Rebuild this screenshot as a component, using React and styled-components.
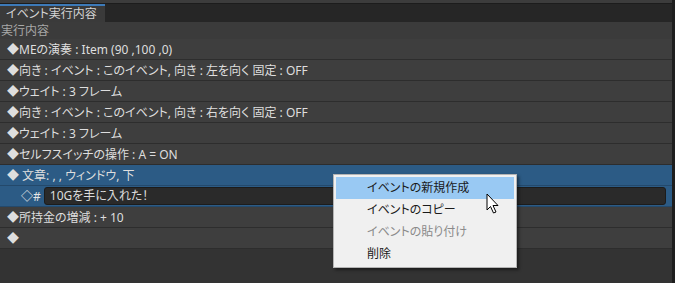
import React from "react";
import styled, { createGlobalStyle } from "styled-components";

const GlobalStyle = createGlobalStyle`
  html, body {
    margin: 0;
    padding: 0;
    background: #333333;
  }
  body {
    font-family: "Noto Sans", "Noto Sans CJK JP", sans-serif;
    font-feature-settings: "palt";
  }
`;

const rows = [
  "◆MEの演奏 : Item (90 ,100 ,0)",
  "◆向き : イベント : このイベント, 向き : 左を向く 固定 : OFF",
  "◆ウェイト : 3 フレーム",
  "◆向き : イベント : このイベント, 向き : 右を向く 固定 : OFF",
  "◆ウェイト : 3 フレーム",
  "◆セルフスイッチの操作 : A = ON",
];

const menuItems = [
  { label: "イベントの新規作成", active: true },
  { label: "イベントのコピー" },
  { label: "イベントの貼り付け", disabled: true },
  { label: "削除" },
];

const App = () => {
  return (
    <>
      <GlobalStyle />
      <Screen>
        <TopStrip />
        <TabBar>
          <Tab>イベント実行内容</Tab>
        </TabBar>
        <Panel>
          <Header>実行内容</Header>
          {rows.map((r, i) => (
            <Row key={i}>{r}</Row>
          ))}
          <Row selected>◆ 文章: , , ウィンドウ, 下</Row>
          <Row selected indent>
            <Mark>◇#</Mark>
            <TextInput>10Gを手に入れた！</TextInput>
          </Row>
          <Row>◆所持金の増減 : + 10</Row>
          <Row>◆</Row>
          <Filler />
        </Panel>

        <Menu>
          {menuItems.map((m) => (
            <MenuItem key={m.label} active={m.active} disabled={m.disabled}>
              {m.label}
            </MenuItem>
          ))}
        </Menu>

        <Cursor width="14" height="22" viewBox="0 0 14 22">
          <path
            d="M1 1 L1 17 L4.5 13.5 L7.5 20 L10 19 L7 12.5 L12 12.5 Z"
            fill="#ffffff"
            stroke="#000000"
            strokeWidth="1"
            strokeLinejoin="miter"
          />
        </Cursor>
      </Screen>
    </>
  );
};

export default App;

const Screen = styled.div`
  position: relative;
  width: 675px;
  height: 283px;
  box-sizing: border-box;
  display: flex;
  flex-direction: column;
  overflow: hidden;
  background: #333333;
  border-right: 3px solid #1e1e1e;
`;

const TopStrip = styled.div`
  height: 3px;
  background: #3c3c3c;
  border-bottom: 1px solid #1c1c1c;
`;

const TabBar = styled.div`
  height: 18px;
  display: flex;
  background: #262626;
`;

const Tab = styled.div`
  width: 105px;
  box-sizing: border-box;
  border-top: 2px solid #3d7ab8;
  background: #3a3a3a;
  color: #d4d4d4;
  font-size: 12px;
  line-height: 16px;
  padding-left: 6px;
  white-space: nowrap;
`;

const Panel = styled.div`
  flex: 1;
  display: flex;
  flex-direction: column;
`;

const Header = styled.div`
  height: 17px;
  background: #3b3b3b;
  color: #a8a8a8;
  font-size: 12px;
  line-height: 17px;
  padding-left: 1px;
`;

const Row = styled.div`
  height: 20px;
  flex-shrink: 0;
  display: flex;
  align-items: center;
  gap: 3px;
  background: ${(p) => (p.selected ? "#2c5b85" : "#3e3e3e")};
  border-bottom: 1px solid ${(p) => (p.selected ? "#24496b" : "#2d2d2d")};
  color: #dedede;
  font-size: 12px;
  padding-left: ${(p) => (p.indent ? "21px" : "7px")};
  padding-right: 6px;
  white-space: nowrap;
`;

const Mark = styled.span`
  color: #e6e6e6;
`;

const TextInput = styled.div`
  flex: 1;
  height: 18px;
  box-sizing: border-box;
  background: #2a2a2a;
  border: 1px solid #1c1c1c;
  border-radius: 3px;
  color: #dcdcdc;
  font-size: 12px;
  line-height: 16px;
  padding-left: 5px;
`;

const Filler = styled.div`
  flex: 1;
  background: #333333;
`;

const Menu = styled.div`
  position: absolute;
  left: 333px;
  top: 174px;
  width: 178px;
  padding: 2px;
  background: #f0f0f0;
  border: 1px solid #b4b4b4;
  box-shadow: 2px 2px 3px rgba(0, 0, 0, 0.45);
`;

const MenuItem = styled.div`
  height: 22px;
  line-height: 22px;
  padding-left: 31px;
  font-size: 12px;
  color: ${(p) => (p.disabled ? "#8a8a8a" : "#1a1a1a")};
  background: ${(p) => (p.active ? "#99c9f3" : "transparent")};
`;

const Cursor = styled.svg`
  position: absolute;
  left: 486px;
  top: 193px;
`;
